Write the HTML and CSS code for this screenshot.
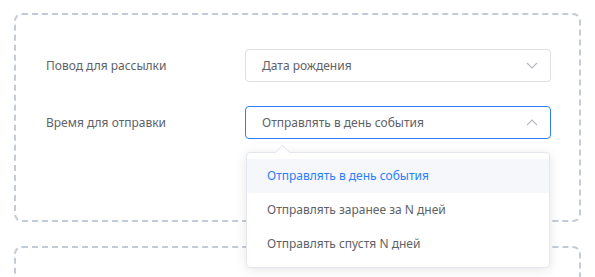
FILE: index.html
```html
<!DOCTYPE html>
<html lang="ru">
<head>
    <meta charset="UTF-8">
    <title>Настройки рассылки</title>
    <link rel="stylesheet" href="styles.css">
</head>
<body>
    <div class="card">
        <div class="row">
            <label class="row-label">Повод для рассылки</label>
            <div class="select">
                <span>Дата рождения</span>
                <svg class="chevron" width="12" height="7" viewBox="0 0 12 7"><path d="M1 1l5 5 5-5" fill="none" stroke="#b4b8bf" stroke-width="1.1"/></svg>
            </div>
        </div>
        <div class="row">
            <label class="row-label">Время для отправки</label>
            <div class="select is-open">
                <span>Отправлять в день события</span>
                <svg class="chevron" width="12" height="7" viewBox="0 0 12 7"><path d="M1 6l5-5 5 5" fill="none" stroke="#b4b8bf" stroke-width="1.1"/></svg>

                <!-- выпадающий список -->
                <ul class="dropdown">
                    <li class="selected">Отправлять в день события</li>
                    <li>Отправлять заранее за N дней</li>
                    <li>Отправлять спустя N дней</li>
                </ul>
            </div>
        </div>
    </div>
    <div class="card card-next"></div>
</body>
</html>
```

FILE: styles.css
```css
html {
    height: 277px;
    overflow: hidden;
}

body {
    margin: 0;
    padding: 13px 14px 0;
    background: #fff;
    font-family: "Noto Sans", "Open Sans", sans-serif;
    font-size: 12px;
    color: #606266;
}

.card {
    border: 2px dashed #c3cbd6;
    border-radius: 8px;
    height: 171px;
    padding: 34px 28px 0 30px;
    display: flex;
    flex-direction: column;
    gap: 24px;
}

.card-next {
    margin-top: 24px;
    height: 40px;
    padding: 0;
}

.row {
    display: flex;
    align-items: center;
}

.row-label {
    width: 199px;
    flex-shrink: 0;
}

.select {
    position: relative;
    flex: 1;
    height: 31px;
    border: 1px solid #dcdfe6;
    border-radius: 4px;
    display: flex;
    align-items: center;
    justify-content: space-between;
    padding: 0 12px 0 16px;
}

.select.is-open {
    border-color: #2d7ff9;
}

.chevron {
    display: block;
}

.dropdown {
    position: absolute;
    top: 45px;
    left: 0;
    right: 0;
    margin: 0;
    padding: 6px 0;
    list-style: none;
    background: #fff;
    border: 1px solid #e4e7ed;
    border-radius: 4px;
    box-shadow: 0 2px 12px rgba(0, 0, 0, 0.1);
    z-index: 5;
}

.dropdown::before {
    content: "";
    position: absolute;
    top: -6px;
    left: 30px;
    width: 10px;
    height: 10px;
    background: #fff;
    border-left: 1px solid #e4e7ed;
    border-top: 1px solid #e4e7ed;
    transform: rotate(45deg);
}

.dropdown li {
    position: relative;
    height: 34px;
    line-height: 34px;
    padding: 0 20px;
}

.dropdown li.selected {
    background: #f5f7fa;
    color: #2d7ff9;
}
```
